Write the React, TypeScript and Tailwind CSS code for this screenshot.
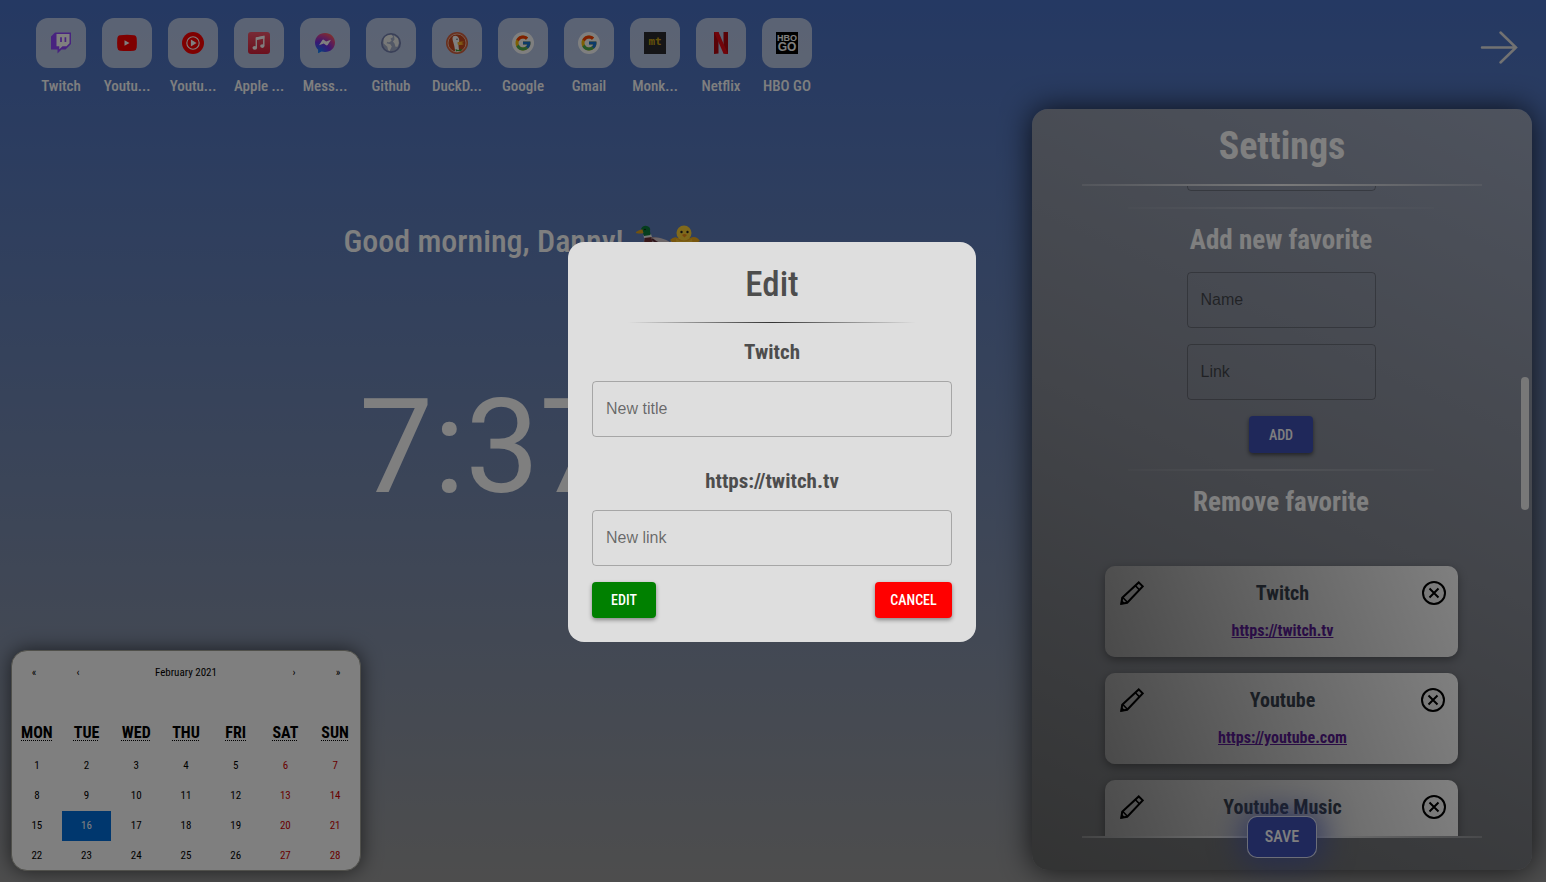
import type { ReactNode } from 'react';
import { FcGoogle } from 'react-icons/fc';

const TwitchLogo = () => (
  <svg viewBox="0 0 22 22" className="size-[22px]" aria-hidden="true">
    <path d="M5 0.500H21V12L15.500 17.500H11.500L7.500 21.500V17.500H1V4.500Z" fill="#9146ff" />
    <path d="M6.500 2H19.500V11.300L16.500 14.300H12.500L9.300 17.300V14.300H6.500Z" fill="#fff" />
    <path d="M11 5.200V10M15.400 5.200V10" stroke="#9146ff" strokeWidth="1.700" />
  </svg>
);

const YoutubeLogo = () => (
  <svg viewBox="0 0 22 22" className="size-[22px]" aria-hidden="true">
    <path d="M4 3.200Q11 2.400 18 3.200Q20.500 3.500 20.700 6.500Q21.100 11 20.700 15.500Q20.400 18.400 18 18.700Q11 19.500 4 18.700Q1.600 18.400 1.300 15.500Q0.900 11 1.300 6.500Q1.600 3.500 4 3.200Z" fill="#f00" />
    <path d="M8.500 8.200L13.500 11L8.500 13.800Z" fill="#fff" />
  </svg>
);

const YoutubeMusicLogo = () => (
  <svg viewBox="0 0 22 22" className="size-[22px]" aria-hidden="true">
    <circle cx="11" cy="11" r="11" fill="#f00" />
    <circle cx="11" cy="11" r="6.200" fill="none" stroke="#fff" strokeWidth="1.100" />
    <path d="M8.900 7.600L14.600 11L8.900 14.400Z" fill="#fff" />
  </svg>
);

const AppleMusicLogo = () => (
  <svg viewBox="0 0 22 22" className="size-[22px]" aria-hidden="true">
    <defs>
      <linearGradient id="apple-music" x1="0" y1="0" x2="0" y2="1">
        <stop offset="0" stopColor="#f0566c" />
        <stop offset="1" stopColor="#d8203a" />
      </linearGradient>
    </defs>
    <rect width="22" height="22" rx="3" fill="url(#apple-music)" />
    <path d="M8.300 15.500V6L15.800 4.400V13.700" fill="none" stroke="#fff" strokeWidth="1.400" />
    <path d="M8 5.600L16.400 3.900V6.600L8 8.300Z" fill="#fff" />
    <ellipse cx="6.800" cy="15.800" rx="2.300" ry="1.900" fill="#fff" />
    <ellipse cx="14.300" cy="14.100" rx="2.200" ry="1.800" fill="#fff" />
  </svg>
);

const MessengerLogo = () => (
  <svg viewBox="0 0 22 22" className="size-[22px]" aria-hidden="true">
    <defs>
      <radialGradient id="messenger" cx="0.2" cy="1" r="1.1">
        <stop offset="0" stopColor="#0088ff" />
        <stop offset="0.5" stopColor="#7030e8" />
        <stop offset="0.8" stopColor="#d0409a" />
        <stop offset="1" stopColor="#ff6058" />
      </radialGradient>
    </defs>
    <path d="M11 1C5.300 1 1 5.200 1 10.600C1 13.500 2.200 16 4.100 17.700V21.200L7.500 19.600C8.600 19.900 9.800 20.100 11 20.100C16.700 20.100 21 16 21 10.600C21 5.200 16.700 1 11 1Z" fill="url(#messenger)" />
    <path d="M5 13.300L8.200 8.200Q9 7.200 10.100 7.900L12.200 9.500L17 7.800L13.800 12.800Q13 13.900 11.800 13.100L9.800 11.500Z" fill="#fff" />
  </svg>
);

const GlobeLogo = () => (
  <svg viewBox="0 0 22 22" className="size-[22px]" aria-hidden="true">
    <circle cx="11" cy="11" r="9.200" fill="#a4b0cc" stroke="#7480b0" strokeWidth="1.700" />
    <path d="M4 6.500Q6.500 2.600 11.500 2.800L13.300 5L10.500 6.500L11.600 8.800L9 10.400L7.600 9.700L6.500 11.300L10.300 12.300L11.800 14.400L9.500 19.200Q7.500 18 7.300 14.700L3.400 11.200Z" fill="#f1f2f0" />
    <path d="M14 3.500L18 6.600L18.900 11L17.600 14.800L15.500 14.700L14.500 11.500L12.900 9.500L14.500 7.500Z" fill="#f1f2f0" />
  </svg>
);

const DuckLogo = () => (
  <svg viewBox="0 0 22 22" className="size-[22px]" aria-hidden="true">
    <circle cx="11" cy="11" r="11" fill="#d4603c" />
    <circle cx="11" cy="11" r="9" fill="#c8481e" stroke="#f0c0ac" strokeWidth="0.900" />
    <path d="M9.300 19.800Q8.600 14 7.200 10Q5.800 5.600 7.300 4.200Q11 3 12.700 6Q13.800 8 13 10.500Q11.800 14 13.500 19.300Q11.500 20.500 9.300 19.800Z" fill="#fff" />
    <circle cx="11" cy="7.300" r="0.700" fill="#345" />
    <path d="M11.500 10.200Q15 9 18.200 9.700L15.300 11L18 12Q15 13.800 11.700 12.500Z" fill="#fdb428" />
    <path d="M9.500 17L12 17.900L15.800 16.800L15.300 19.300L11.900 18.900L10 19.600Z" fill="#3c9b2b" />
  </svg>
);

const GoogleLogo = () => (
  <span className="flex size-[22px] items-center justify-center rounded-full bg-white">
    <FcGoogle className="size-[18px]" aria-hidden="true" />
  </span>
);

const MonkeytypeLogo = () => (
  <span className="flex size-[22px] items-center justify-center bg-[#2a2b2e] pb-1 font-['DejaVu_Sans_Mono',monospace] text-[11px] leading-none font-bold text-[#c8a214]">
    mt
  </span>
);

const NetflixLogo = () => (
  <svg viewBox="0 0 22 22" className="size-[22px]" aria-hidden="true">
    <path d="M4 0H8.500V21.500L4 22ZM13.500 0H18V22L13.500 21.500Z" fill="#b20710" />
    <path d="M4 0H8.500L18 22L13.500 21.500Z" fill="#e50914" />
  </svg>
);

const HboLogo = () => (
  <span className="flex size-[22px] flex-col items-center justify-center bg-black font-['Liberation_Sans',sans-serif] text-[9px] leading-[9px] font-black text-white">
    <span>HBO</span>
    <span className="text-[12px]">GO</span>
  </span>
);

const favorites: { label: string; icon: ReactNode }[] = [
  { label: 'Twitch', icon: <TwitchLogo /> },
  { label: 'Youtu...', icon: <YoutubeLogo /> },
  { label: 'Youtu...', icon: <YoutubeMusicLogo /> },
  { label: 'Apple ...', icon: <AppleMusicLogo /> },
  { label: 'Mess...', icon: <MessengerLogo /> },
  { label: 'Github', icon: <GlobeLogo /> },
  { label: 'DuckD...', icon: <DuckLogo /> },
  { label: 'Google', icon: <GoogleLogo /> },
  { label: 'Gmail', icon: <GoogleLogo /> },
  { label: 'Monk...', icon: <MonkeytypeLogo /> },
  { label: 'Netflix', icon: <NetflixLogo /> },
  { label: 'HBO GO', icon: <HboLogo /> },
];

const savedLinks: { title: string; url?: string }[] = [
  { title: 'Twitch', url: 'https://twitch.tv' },
  { title: 'Youtube', url: 'https://youtube.com' },
  { title: 'Youtube Music' },
];

const weekdays = ['MON', 'TUE', 'WED', 'THU', 'FRI', 'SAT', 'SUN'];
const weeks = [0, 1, 2, 3].map((w) => [1, 2, 3, 4, 5, 6, 7].map((d) => w * 7 + d));
const today = 16;

const inputClass =
  "block h-14 w-full rounded-sm border border-black/25 bg-transparent px-[13px] font-['Liberation_Sans',sans-serif] text-base text-black";

function TextField({ id, label }: { id: string; label: string }) {
  return (
    <div className="relative w-full">
      <input id={id} type="text" className={inputClass} />
      <label
        htmlFor={id}
        className="pointer-events-none absolute inset-y-0 left-3.5 flex items-center font-['Liberation_Sans',sans-serif] text-base text-black/54"
      >
        {label}
      </label>
    </div>
  );
}

function Ducks() {
  return (
    <svg viewBox="0 0 64 32" className="h-8 w-16" role="img" aria-label="Duck and chick">
      <path d="M9 12Q6 20 9 26Q14 31 24 29Q32 27 36 18L30 16Q26 13 18 12Z" fill="#a88f96" />
      <path d="M15 13Q24 11 34 17L37 15L34 21Q25 22 15 13Z" fill="#d8ccd0" />
      <path d="M9 12Q7 20 11 24Q16 22 16 16L15 11Z" fill="#6e2f35" />
      <path d="M16 14Q24 21 33 20" stroke="#5d2b38" strokeWidth="2" fill="none" />
      <path d="M7.500 10L15 9L16 12L8 13Z" fill="#eee" />
      <path d="M5 4Q7 0 11 1Q15 2 14 6L14.500 10L8 11L7 8Z" fill="#0b7d3c" />
      <path d="M0 7Q4 4 6.500 4.500L7.500 8Q4 9 0 8Z" fill="#e4a51c" />
      <circle cx="9" cy="4.500" r="0.800" fill="#111" />
      <path d="M34 15Q38 11 42 13L54 13Q60 10 64 16Q61 18 58 18Q58 29 49 31Q39 30 39 18Q36 18 34 15Z" fill="#f0ac1c" />
      <circle cx="48" cy="8" r="7.500" fill="#ffd338" />
      <path d="M40 14Q48 19 56 14L57 24Q49 30 41 24Z" fill="#fbc42e" />
      <circle cx="45.500" cy="7" r="1.200" fill="#222" />
      <circle cx="51.500" cy="7" r="1.200" fill="#222" />
      <path d="M46 10Q48.500 8 51 10L48.500 12.500Z" fill="#f08a1c" />
    </svg>
  );
}

function Calendar() {
  return (
    <section
      aria-label="Calendar"
      className="mt-auto h-[221px] w-[350px] overflow-hidden rounded-2xl border border-[#a0a096] bg-white text-[11px] text-black shadow-[0_0_20px_rgba(0,0,0,0.6)]"
    >
      <div className="mb-4 flex h-11 items-center">
        <button type="button" aria-label="Previous year" className="h-11 w-11">«</button>
        <button type="button" aria-label="Previous month" className="h-11 w-11">‹</button>
        <button type="button" className="h-11 flex-1">February 2021</button>
        <button type="button" aria-label="Next month" className="h-11 w-11">›</button>
        <button type="button" aria-label="Next year" className="h-11 w-11">»</button>
      </div>
      <table className="w-full table-fixed border-collapse text-center">
        <thead>
          <tr className="h-10">
            {weekdays.map((d) => (
              <th key={d} scope="col" className="p-0 pt-1 text-base font-bold">
                <abbr className="underline decoration-dotted decoration-1 underline-offset-2">{d}</abbr>
              </th>
            ))}
          </tr>
        </thead>
        <tbody>
          {weeks.map((week) => (
            <tr key={week[0]} className="h-[30px]">
              {week.map((day, i) => (
                <td
                  key={day}
                  className={day === today ? 'bg-[#006edc] p-0 text-white' : i > 4 ? 'p-0 text-[#d10000]' : 'p-0'}
                >
                  {day}
                </td>
              ))}
            </tr>
          ))}
        </tbody>
      </table>
    </section>
  );
}

function LinkCard({ title, url }: { title: string; url?: string }) {
  return (
    <article className="h-[91px] w-[353px] shrink-0 rounded-[10px] bg-[linear-gradient(250deg,#ffffff,#d0d0d0_45%,#949494)] pt-[15px] pr-3 pl-[15px] shadow-[0_3px_10px_rgba(0,0,0,0.35)]">
      <div className="flex h-6 items-center justify-between">
        <button type="button" aria-label={`Edit ${title}`}>
          <svg viewBox="0 0 24 24" className="size-6" fill="none" stroke="#000" strokeWidth="2">
            <path d="M1.300 22.700L2.200 16.800L18.700 1.400L22.700 5.400L7.200 21.800Z" />
            <path d="M15.200 4.500L19.500 8.900M2.800 16.500L7.400 21.200" strokeWidth="1.600" />
            <path d="M0.500 23.500L1.300 18.500L5.500 22.700Z" fill="#000" stroke="none" />
          </svg>
        </button>
        <h3 className="text-xl font-bold text-[#353d48]">{title}</h3>
        <button type="button" aria-label={`Remove ${title}`}>
          <svg viewBox="0 0 24 24" className="size-6" fill="none" stroke="#000" strokeWidth="2">
            <circle cx="12" cy="12" r="11" />
            <path d="M7.500 7.500L16.500 16.500M16.500 7.500L7.500 16.500" />
          </svg>
        </button>
      </div>
      {url && (
        <p className="mt-3.5 text-center text-base leading-6 font-bold">
          <a href={url} className="text-[#551a8b] underline">{url}</a>
        </p>
      )}
    </article>
  );
}

const Divider = () => (
  <hr className="h-0.5 w-[306px] shrink-0 border-0 bg-[linear-gradient(90deg,rgba(255,255,255,0.04),rgba(255,255,255,0.2),rgba(255,255,255,0.04))]" />
);

const PanelRule = () => (
  <hr className="h-0.5 w-4/5 shrink-0 border-0 bg-[linear-gradient(90deg,rgba(255,255,255,0.2),#f4f4f4,rgba(255,255,255,0.2))]" />
);

function Settings() {
  return (
    <aside className="relative flex w-[500px] shrink-0 flex-col items-center rounded-2xl bg-[linear-gradient(205deg,#9ca6bc,#868a94_50%,#666767)] text-white shadow-[0_0_30px_rgba(0,0,0,0.75)]">
      <h1 className="flex h-[75px] items-center text-[38px] font-bold">Settings</h1>
      <PanelRule />
      <div className="flex min-h-0 w-full flex-1 flex-col items-center overflow-hidden pr-0.5">
        <div className="-mt-[51px] w-[189px] shrink-0">
          <input type="text" aria-label="Your name" className={inputClass} />
        </div>
        <div className="h-4 shrink-0" />
        <Divider />
        <h2 className="mt-[13px] mb-[14px] text-[27px] leading-9 font-bold">Add new favorite</h2>
        <form className="flex w-[189px] shrink-0 flex-col items-center gap-4">
          <TextField id="favorite-name" label="Name" />
          <TextField id="favorite-link" label="Link" />
          <button type="button" className="h-[37px] w-16 rounded-sm bg-[#3f51b5] text-sm font-medium shadow-[0_2px_4px_rgba(0,0,0,0.5)]">ADD</button>
        </form>
        <div className="h-4 shrink-0" />
        <Divider />
        <h2 className="mt-[13px] mb-[46px] text-[27px] leading-9 font-bold">Remove favorite</h2>
        <div className="flex flex-col gap-4">
          {savedLinks.map((link) => (
            <LinkCard key={link.title} {...link} />
          ))}
        </div>
      </div>
      <PanelRule />
      <div className="flex h-8 shrink-0 items-start">
        <button type="button" className="-mt-[22px] h-[42px] w-[70px] rounded-[10px] border border-white/80 bg-[#3f51b5] text-base font-medium shadow-[0_0_30px_6px_rgba(63,81,181,0.7)]">SAVE</button>
      </div>
      <div className="absolute top-[268px] right-[3px] h-[133px] w-2 rounded-full bg-[#f0f0f0]" />
    </aside>
  );
}

function EditDialog() {
  return (
    <div
      role="dialog"
      aria-modal="true"
      aria-labelledby="edit-title"
      className="flex w-[408px] flex-col items-center rounded-2xl bg-[#dedede] p-6 text-[#4d4d4d]"
    >
      <h2 id="edit-title" className="text-[35px] leading-[38px] font-medium">Edit</h2>
      <hr className="mt-[18px] h-px w-4/5 border-0 bg-[linear-gradient(90deg,transparent,#333,transparent)]" />
      <h3 className="my-[17px] text-[21px] leading-6 font-bold">Twitch</h3>
      <TextField id="new-title" label="New title" />
      <h3 className="mt-8 mb-[17px] text-[21px] leading-6 font-bold">https://twitch.tv</h3>
      <TextField id="new-link" label="New link" />
      <div className="mt-4 flex w-full justify-between text-sm font-medium text-white">
        <button type="button" className="h-9 w-16 rounded-sm bg-[#008000] shadow-[0_2px_4px_rgba(0,0,0,0.4)]">EDIT</button>
        <button type="button" className="h-9 w-[77px] rounded-sm bg-[#ff0000] shadow-[0_2px_4px_rgba(0,0,0,0.4)]">CANCEL</button>
      </div>
    </div>
  );
}

export default function App() {
  return (
    <div className="relative flex h-screen flex-col overflow-hidden bg-linear-to-b from-[#4a72c6] to-[#9b9b9b] font-['Roboto_Condensed','Liberation_Sans_Narrow',Roboto,sans-serif]">
      <header className="flex h-[109px] shrink-0 items-start justify-between pt-[18px] pr-7 pl-9">
        <nav aria-label="Favorites" className="flex gap-4">
          {favorites.map((f, i) => (
            <a key={i} href="#" className="flex w-[50px] flex-col items-center text-white">
              <span className="flex size-[50px] items-center justify-center rounded-xl bg-white/60">{f.icon}</span>
              <span className="mt-1.5 text-[15px] leading-6 font-medium whitespace-nowrap">{f.label}</span>
            </a>
          ))}
        </nav>
        <button type="button" aria-label="Close settings" className="mt-3">
          <svg viewBox="0 0 38 36" className="h-9 w-[38px]" fill="none" stroke="#e4e4e4" strokeWidth="2.500" strokeLinecap="round">
            <path d="M2 17.500H36M20.500 2.500L36 17.500L20.500 32.500" />
          </svg>
        </button>
      </header>
      <div className="flex min-h-0 flex-1 pr-3.5 pb-3">
        <main className="-mb-px flex flex-1 flex-col pl-[11px]">
          <div className="flex flex-col items-center pt-28 text-white">
            <p className="flex h-10 items-center gap-3 text-[32px] font-medium">
              Good morning, Danny! <Ducks />
            </p>
            <p className="mt-[120px] w-[325px] font-[Roboto,sans-serif] text-[132px] leading-none">7:37</p>
          </div>
          <Calendar />
        </main>
        <Settings />
      </div>
      <div className="absolute inset-0 flex items-center justify-center bg-black/50 pt-0.5 pr-0.5">
        <EditDialog />
      </div>
    </div>
  );
}
